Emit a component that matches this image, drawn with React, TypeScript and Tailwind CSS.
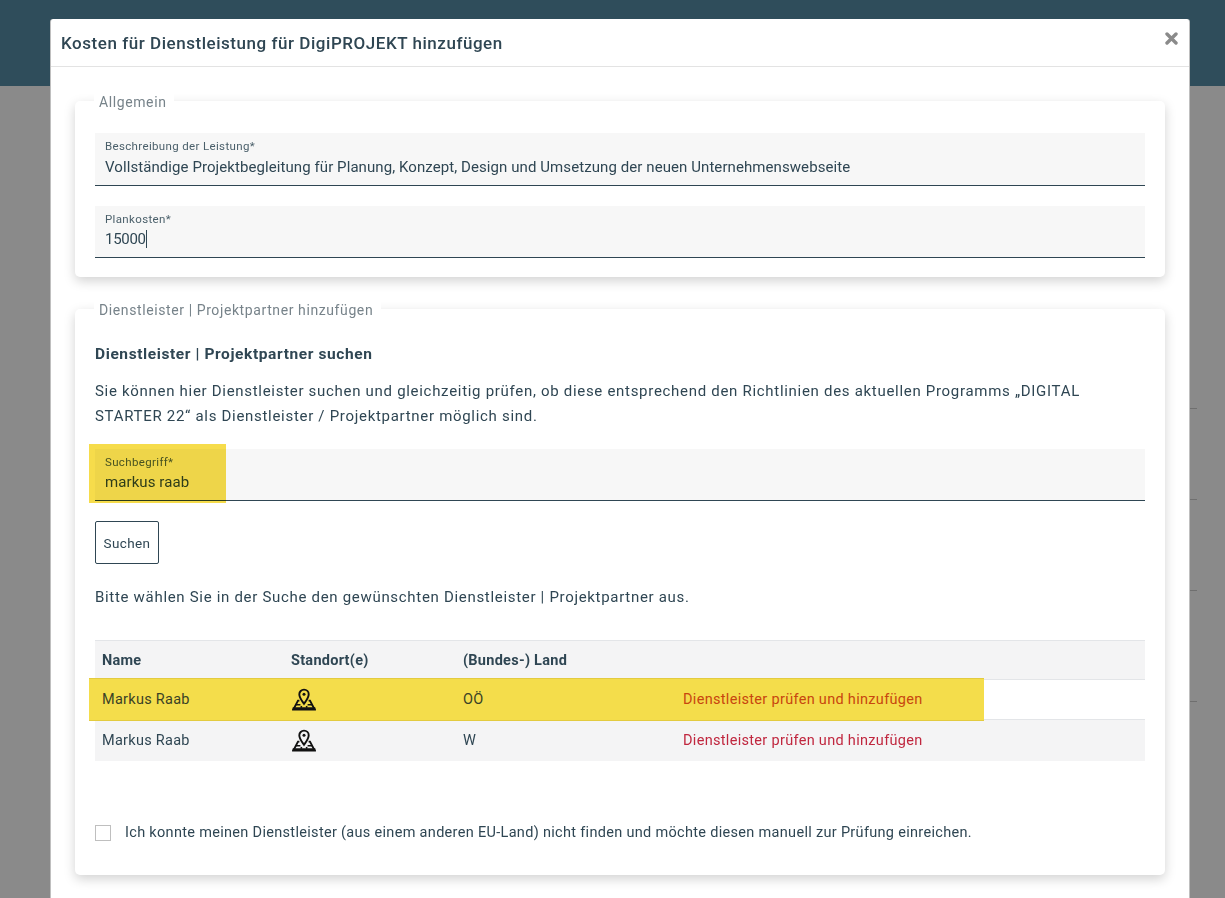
import React from 'react';

function MapPinIcon() {
  return (
    <svg width="24" height="23" viewBox="0 0 24 23" fill="none" stroke="#111" strokeWidth="1.9">
      <path d="M12 15.8 C9.6 12.4 7.3 9.8 7.3 6.3 a4.7 4.7 0 0 1 9.4 0 C16.7 9.8 14.4 12.4 12 15.8 Z" />
      <circle cx="12" cy="6.2" r="1.5" fill="#111" stroke="none" />
      <path d="M7.4 12.6 H6 L1.6 21 H22.4 L18 12.6 H16.6" />
      <path d="M0.8 19.2 H23.2 L24 22.4 H0 Z" fill="#111" stroke="none" />
      <path d="M4 16.8 H8.4 M15.6 16.8 H20 M9.6 18 L9 19.6 M14.4 18 L15 19.6" strokeWidth="1.6" />
    </svg>
  );
}

function Field({ label, value, caret, tall }: { label: string; value: string; caret?: boolean; tall?: boolean }) {
  return (
    <div className={`${tall ? 'h-[53px]' : 'h-[52px]'} bg-[#f7f7f7] border-b border-[#2f4653] px-[10px] pt-[6px]`}>
      <div className="text-[11.5px] leading-[14px] tracking-[0.35px] text-[#4a5f6a]">{label}</div>
      <div
        className={`${tall ? 'mt-[4px]' : 'mt-[3px]'} ${caret ? 'tracking-[-0.3px]' : 'tracking-[0.08px]'} text-[15px] leading-[20px] text-[#2f4653] flex items-center`}
      >
        {value}
        {caret && <span className="inline-block w-px h-[18px] bg-[#2f4653]" />}
      </div>
    </div>
  );
}

function Card({ legend, className, children }: { legend: string; className: string; children: React.ReactNode }) {
  return (
    <div className={`relative bg-white rounded-[5px] shadow-[0_4px_12px_rgba(0,0,0,0.18)] px-5 ${className}`}>
      {/* legend sits on the card edge */}
      <span className="absolute left-[19px] top-[-8px] bg-white pl-[5px] pr-[8px] text-[14px] leading-[18px] tracking-[0.6px] text-[#77838a]">
        {legend}
      </span>
      {children}
    </div>
  );
}

const rows = [
  { name: 'Markus Raab', land: 'OÖ', active: true },
  { name: 'Markus Raab', land: 'W', active: false },
];

export default function App() {
  return (
    <div className="relative h-[898px] overflow-hidden bg-[#8a8a8a]">
      <div className="h-[86px] bg-[#2f4d5b]" />
      <div className="flex flex-col items-end pt-[322px] gap-[90px]">
        <div className="w-[7px] h-px bg-[#6f6f6f] mr-[28px]" />
        <div className="w-[7px] h-px bg-[#6f6f6f] mr-[28px]" />
        <div className="w-[7px] h-px bg-[#6f6f6f] mr-[28px]" />
        <div className="w-[7px] h-px bg-[#6f6f6f] mr-[28px] mt-[20px]" />
      </div>

      <div className="absolute left-[50px] top-[19px] w-[1140px] h-[900px] bg-white rounded-t-[3px] border-x border-[rgba(0,0,0,0.25)] font-['Roboto',sans-serif] text-[#2f4653]">
        <div className="h-[48px] border-b border-[#e3e3e3] flex items-center justify-between pl-[10px] pr-[11px]">
          <h1 className="pt-[2px] text-[17px] font-medium tracking-[0.54px] text-[#2f4653]">
            Kosten für Dienstleistung für DigiPROJEKT hinzufügen
          </h1>
          <svg width="13" height="13" viewBox="0 0 13 13" className="mb-[8px]" stroke="#8a8a8a" strokeWidth="3.4" strokeLinecap="round">
            <path d="M2 2 L11 11 M11 2 L2 11" />
          </svg>
        </div>

        <div className="pt-[34px] px-[24px] flex flex-col gap-[32px]">
          <Card legend="Allgemein" className="h-[176px] pt-[32px]">
            <div className="flex flex-col gap-[20px]">
              <Field
                tall
                label="Beschreibung der Leistung*"
                value="Vollständige Projektbegleitung für Planung, Konzept, Design und Umsetzung der neuen Unternehmenswebseite"
              />
              <Field label="Plankosten*" value="15000" caret />
            </div>
          </Card>

          <Card legend="Dienstleister | Projektpartner hinzufügen" className="h-[566px] pt-[36px]">
            <h2 className="text-[15.5px] leading-[18px] font-bold tracking-[0.6px] text-[#2f4653]">
              Dienstleister | Projektpartner suchen
            </h2>
            <p className="mt-[16px] text-[15px] leading-[25px] tracking-[0.7px] text-[#2f4653]">
              Sie können hier Dienstleister suchen und gleichzeitig prüfen, ob diese entsprechend den Richtlinien des aktuellen Programms „DIGITAL
              <br />
              STARTER 22“ als Dienstleister / Projektpartner möglich sind.
            </p>

            <div className="relative mt-[20px]">
              <Field label="Suchbegriff*" value="markus raab" />
              {/* yellow marker over the search field */}
              <div className="absolute left-[-6px] top-[-5px] w-[137px] h-[59px] bg-[#f6dc4b] mix-blend-multiply" />
            </div>

            <button className="mt-[20px] block w-[64px] h-[43px] rounded-[2px] border border-[#2f4653] bg-white pt-px text-[13.5px] tracking-[0.4px] text-[#2f4653]">
              Suchen
            </button>

            <p className="mt-[23px] text-[15px] leading-[20px] tracking-[0.69px] text-[#2f4653]">
              Bitte wählen Sie in der Suche den gewünschten Dienstleister | Projektpartner aus.
            </p>

            <div className="mt-[33px] text-[14.5px] tracking-[0.27px]">
              <div className="grid grid-cols-[189px_172px_1fr] items-center h-[40px] pt-px bg-[#f4f4f5] border-y border-[#e3e5e8] pl-[7px] font-bold text-[#2f4653]">
                <span>Name</span>
                <span>Standort(e)</span>
                <span>(Bundes-) Land</span>
              </div>
              {rows.map((row) =>
                row.active ? (
                  <div key={row.land} className="relative border-b border-[#e3e5e8] h-[40px]">
                    {/* yellow marker over the first result row */}
                    <div className="absolute left-[-6px] top-[-2px] bottom-[-2px] w-[895px] pl-[13px] grid grid-cols-[189px_172px_220px_1fr] items-center bg-[#f4dd4b] border-y border-[#e3cb3f] text-[#3a4226]">
                      <span>{row.name}</span>
                      <span className="flex pl-px">
                        <MapPinIcon />
                      </span>
                      <span>{row.land}</span>
                      <span className="text-[#c8460f] tracking-[0.31px]">Dienstleister prüfen und hinzufügen</span>
                    </div>
                  </div>
                ) : (
                  <div key={row.land} className="grid grid-cols-[189px_172px_220px_1fr] items-center h-[41px] pl-[7px] bg-[#f4f4f5]">
                    <span>{row.name}</span>
                    <span className="flex pl-px">
                      <MapPinIcon />
                    </span>
                    <span>{row.land}</span>
                    <span className="text-[#c0273f] tracking-[0.31px]">Dienstleister prüfen und hinzufügen</span>
                  </div>
                ),
              )}
            </div>

            <label className="mt-[61px] flex items-center gap-[14px]">
              <span className="w-[16px] h-[16px] border border-[#bfbfbf] bg-white" />
              <span className="text-[14.5px] tracking-[0.31px] text-[#2f4653]">
                Ich konnte meinen Dienstleister (aus einem anderen EU-Land) nicht finden und möchte diesen manuell zur Prüfung einreichen.
              </span>
            </label>
          </Card>
        </div>
      </div>
    </div>
  );
}
